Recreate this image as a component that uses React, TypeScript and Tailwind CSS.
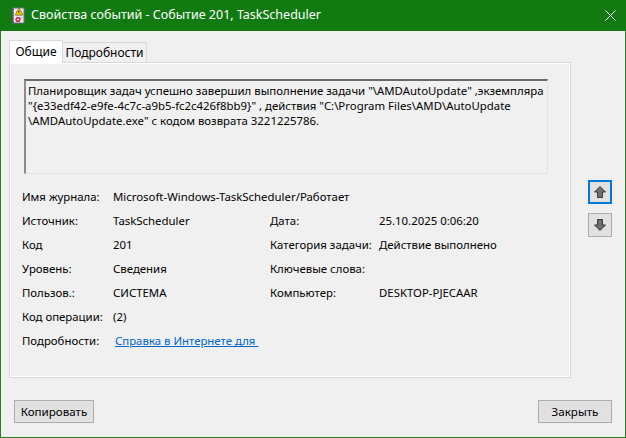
import React from "react";

const font = { fontFamily: '"Noto Sans", "Segoe UI", sans-serif' };

function TitleIcon() {
  return (
    <svg width="16" height="17" viewBox="0 0 16 17">
      <rect x="3" y="1" width="11" height="15" fill="#e8eaf4" stroke="#6b6f8a" />
      <line x1="6" y1="5" x2="12" y2="5" stroke="#8a90b8" />
      <line x1="6" y1="8" x2="12" y2="8" stroke="#8a90b8" />
      <line x1="6" y1="11" x2="12" y2="11" stroke="#8a90b8" />
      {[2, 5, 8, 11, 14].map((y) => (
        <rect key={y} x="1" y={y} width="3" height="1.5" fill="#555" />
      ))}
      <polygon points="9,1 13,8 5,8" fill="#f5c400" stroke="#8a6d00" strokeWidth="0.7" />
      <rect x="8.6" y="3.5" width="0.8" height="2.5" fill="#222" />
      <circle cx="8" cy="12.5" r="2.6" fill="#d8283a" />
      <rect x="6.8" y="11.8" width="2.4" height="1.4" fill="#fff" />
    </svg>
  );
}

function Arrow({ down }: { down?: boolean }) {
  return (
    <svg width="14" height="14" viewBox="0 0 14 14" className={down ? "rotate-180" : ""}>
      <polygon points="7,1.5 12.5,7 9.5,7 9.5,12.5 4.5,12.5 4.5,7 1.5,7" fill="#6e6e6e" stroke="#3a3a3a" strokeWidth="1" strokeLinejoin="round" />
    </svg>
  );
}

const rows: [string, string, string?, string?][] = [
  ["Источник:", "TaskScheduler", "Дата:", "25.10.2025 0:06:20"],
  ["Код", "201", "Категория задачи:", "Действие выполнено"],
  ["Уровень:", "Сведения", "Ключевые слова:", ""],
  ["Пользов.:", "СИСТЕМА", "Компьютер:", "DESKTOP-PJECAAR"],
  ["Код операции:", "(2)"],
];

export default function App() {
  return (
    <div className="w-[626px] h-[438px] flex flex-col bg-[#f0f0f0] border-x border-b border-[#2c7d22] text-[11.4px] text-black" style={font}>
      <div className="h-[31px] shrink-0 bg-[#117a11] -mx-px flex items-center pl-[10px] text-white">
        <TitleIcon />
        <span className="ml-[5px] text-[12.5px]">Свойства событий - Событие 201, TaskScheduler</span>
        <svg className="ml-auto mr-[10px]" width="11" height="11" viewBox="0 0 11 11">
          <path d="M0.5 0.5 L10.5 10.5 M10.5 0.5 L0.5 10.5" stroke="#fff" strokeWidth="1" />
        </svg>
      </div>

      <div className="flex">
        <div className="pl-[8px] pt-[8px]">
          <div className="flex items-end h-[23px]">
            <div className="h-[23px] w-[54px] bg-white border border-b-0 border-[#d9d9d9] flex items-center justify-center relative top-px z-10 text-[12px]">
              Общие
            </div>
            <div className="h-[20px] w-[84px] border border-l-0 border-b-0 border-[#d9d9d9] flex items-center justify-center text-[12px]">
              Подробности
            </div>
          </div>
          <div className="w-[562px] h-[316px] border border-[#d9d9d9] shadow-[inset_1px_1px_0_#fff,inset_-1px_-1px_0_#fff] pl-[14px] pt-[16px]">
            <div className="w-[524px] h-[95px] border-t-2 border-l-2 border-t-[#696969] border-l-[#8c8c8c] border-b border-r border-b-[#e3e3e3] border-r-[#e3e3e3] pl-[2px] pt-[2px] leading-[15px] whitespace-nowrap">
              <div>Планировщик задач успешно завершил выполнение задачи "\AMDAutoUpdate" ,экземпляра</div>
              <div>"{"{"}e33edf42-e9fe-4c7c-a9b5-fc2c426f8bb9{"}"}" , действия "C:\Program Files\AMD\AutoUpdate</div>
              <div>\AMDAutoUpdate.exe" с кодом возврата 3221225786.</div>
            </div>

            <div className="-ml-[2px] mt-[11px] grid grid-cols-[91px_157px_109px_1fr] auto-rows-[24px] items-center whitespace-nowrap">
              <div>Имя журнала:</div>
              <div className="col-span-3">Microsoft-Windows-TaskScheduler/Работает</div>
              {rows.map(([a, b, c, d]) => (
                <React.Fragment key={a}>
                  <div>{a}</div>
                  <div>{b}</div>
                  <div>{c ?? ""}</div>
                  <div>{d ?? ""}</div>
                </React.Fragment>
              ))}
              <div>Подробности:</div>
              <div className="col-span-3 pl-[2px]">
                <span className="text-[#0066cc] underline">Справка в Интернете для&nbsp;</span>
              </div>
            </div>
          </div>
        </div>

        <div className="ml-[17px] mt-[149px] flex flex-col gap-[9px]">
          <div className="w-[24px] h-[24px] border-2 border-[#0078d7] bg-[#e1e1e1] flex items-center justify-center">
            <Arrow />
          </div>
          <div className="w-[24px] h-[24px] border border-[#adadad] bg-[#e1e1e1] flex items-center justify-center">
            <Arrow down />
          </div>
        </div>
      </div>

      <div className="flex justify-between px-[13px] mt-[22px]">
        <button className="w-[80px] h-[23px] bg-[#e1e1e1] border border-[#adadad] text-[11.6px]">Копировать</button>
        <button className="w-[74px] h-[23px] bg-[#e1e1e1] border border-[#adadad] text-[11.6px]">Закрыть</button>
      </div>
    </div>
  );
}
